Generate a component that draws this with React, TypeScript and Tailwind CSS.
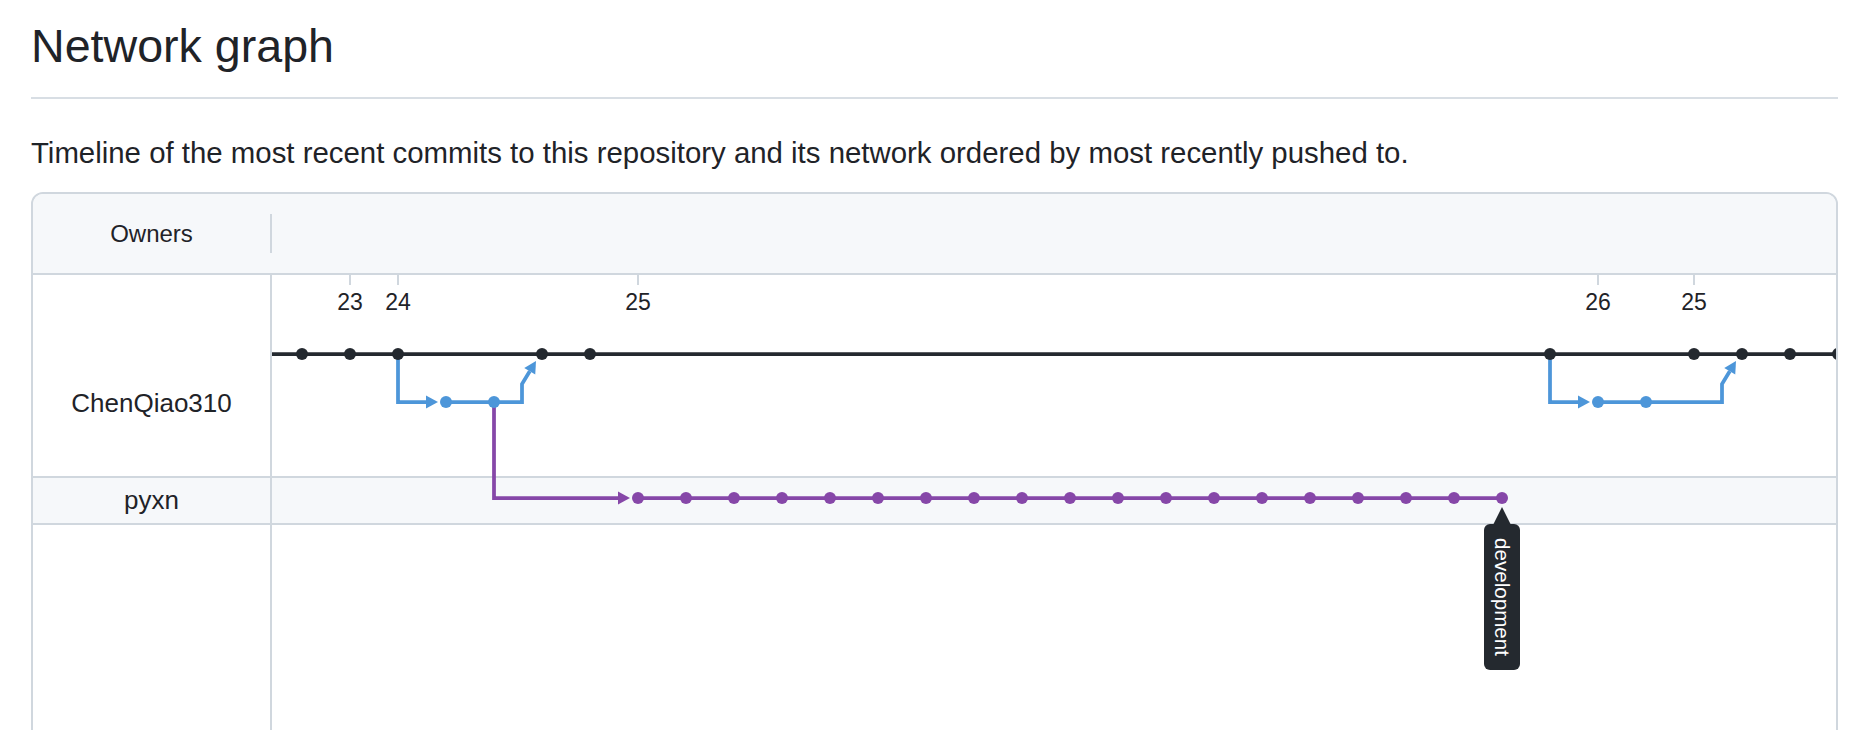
import React from "react";

const BLACK = "#24292f";
const BLUE = "#4d96d9";
const PURPLE = "#8647a8";
const LINE = 3.75;
const DOT = 6;

// graph column -> page x
const cx = (c: number) => 254 + 48 * c;

const MAIN_Y = 354;
const BRANCH_Y = 402;
const FORK_Y = 498;

function RightArrow({ x, y, color }: { x: number; y: number; color: string }) {
  // x is the tip
  return <polygon points={`${x - 12},${y - 6.5} ${x},${y} ${x - 12},${y + 6.5}`} fill={color} />;
}

function MergeBranch({ from, to, target, color }: { from: number; to: number; target: number; color: string }) {
  // fork from main at `from`, two commits, merge back into `target`
  const corner = target - 20;
  const tipX = target - 6;
  const tipY = 361;
  const baseX = tipX - 6.24;
  const baseY = tipY + 10.25;
  return (
    <g>
      <path d={`M${from} ${MAIN_Y} V${BRANCH_Y} H${to - 12}`} stroke={color} strokeWidth={LINE} fill="none" />
      <RightArrow x={to - 8} y={BRANCH_Y} color={color} />
      <path
        d={`M${to} ${BRANCH_Y} H${corner} V384 L${baseX} ${baseY}`}
        stroke={color}
        strokeWidth={LINE}
        fill="none"
        strokeLinejoin="miter"
      />
      <polygon
        points={`${tipX},${tipY} ${baseX + 5.5},${baseY + 3.3} ${baseX - 5.5},${baseY - 3.3}`}
        fill={color}
      />
      <circle cx={to} cy={BRANCH_Y} r={DOT} fill={color} />
      <circle cx={to + 48} cy={BRANCH_Y} r={DOT} fill={color} />
    </g>
  );
}

function Graph() {
  const blackDots = [1, 2, 3, 6, 7, 27, 30, 31, 32, 33];
  const purpleDots = Array.from({ length: 19 }, (_, i) => i + 8);
  const dates: [number, string][] = [
    [2, "23"],
    [3, "24"],
    [8, "25"],
    [28, "26"],
    [30, "25"],
  ];
  const font = "'Liberation Sans', Arial, sans-serif";

  return (
    <svg
      className="absolute left-[239px] top-[81px]"
      width={1564}
      height={455}
      viewBox="272 275 1564 455"
    >
      {dates.map(([c, label], i) => (
        <g key={i}>
          <rect x={cx(c) - 1} y={275} width={2} height={10} fill="#d0d7de" />
          <text x={cx(c)} y={310} textAnchor="middle" fontSize={23} fontFamily={font} fill="#1f2328">
            {label}
          </text>
        </g>
      ))}

      <path d={`M272 ${MAIN_Y} H1840`} stroke={BLACK} strokeWidth={LINE} />

      {/* fork to pyxn */}
      <path d={`M${cx(5)} ${BRANCH_Y} V${FORK_Y} H${cx(8) - 12}`} stroke={PURPLE} strokeWidth={LINE} fill="none" />
      <RightArrow x={cx(8) - 8} y={FORK_Y} color={PURPLE} />
      <path d={`M${cx(8)} ${FORK_Y} H${cx(26)}`} stroke={PURPLE} strokeWidth={LINE} />
      {purpleDots.map((c) => (
        <circle key={c} cx={cx(c)} cy={FORK_Y} r={DOT} fill={PURPLE} />
      ))}

      <MergeBranch from={cx(3)} to={cx(4)} target={cx(6)} color={BLUE} />
      <MergeBranch from={cx(27)} to={cx(28)} target={cx(31)} color={BLUE} />

      {blackDots.map((c) => (
        <circle key={c} cx={cx(c)} cy={MAIN_Y} r={DOT} fill={BLACK} />
      ))}

      {/* branch label */}
      <polygon points="1493,525 1502,507 1511,525" fill={BLACK} />
      <rect x={1484} y={524} width={36} height={146} rx={6} fill={BLACK} />
      <text
        x={1502}
        y={597}
        transform="rotate(90 1502 597)"
        textAnchor="middle"
        dominantBaseline="central"
        fontSize={19.5}
        fontFamily={font}
        fill="#ffffff"
        textLength={118}
        lengthAdjust="spacingAndGlyphs"
      >
        development
      </text>
    </svg>
  );
}

export default function App() {
  return (
    <div className="h-[730px] overflow-hidden bg-white font-['Liberation_Sans',Arial,sans-serif] text-[#1f2328]">
      <div className="ml-[31px] w-[1807px]">
        <h2 className="pt-[17px] text-[46.6px] leading-[59px] font-normal">Network graph</h2>
        <div className="mt-[21px] h-[2px] bg-[#d8dee4]" />
        <p className="mt-[36px] text-[29.4px] leading-[36px]">
          Timeline of the most recent commits to this repository and its network ordered by most recently pushed to.
        </p>

        <div className="relative mt-[21px] flex h-[620px] flex-col overflow-hidden rounded-[12px] border-2 border-[#d0d7de]">
          <div className="flex h-[81px] shrink-0 items-center border-b-2 border-[#d0d7de] bg-[#f6f8fa]">
            <div className="w-[237px] text-center text-[24px]">Owners</div>
            <div className="h-[39px] w-[2px] bg-[#d0d7de]" />
          </div>

          <div className="flex h-[203px] shrink-0 border-b-2 border-[#d0d7de]">
            <div className="w-[239px] border-r-2 border-[#d0d7de] pt-[113px] text-center text-[26px] leading-[30px]">
              ChenQiao310
            </div>
          </div>

          <div className="flex h-[47px] shrink-0 border-b-2 border-[#d0d7de] bg-[#f6f8fa]">
            <div className="flex w-[239px] items-center justify-center border-r-2 border-[#d0d7de] text-[26px]">
              pyxn
            </div>
          </div>

          <div className="flex flex-1">
            <div className="w-[239px] border-r-2 border-[#d0d7de]" />
          </div>

          <Graph />
        </div>
      </div>
    </div>
  );
}
